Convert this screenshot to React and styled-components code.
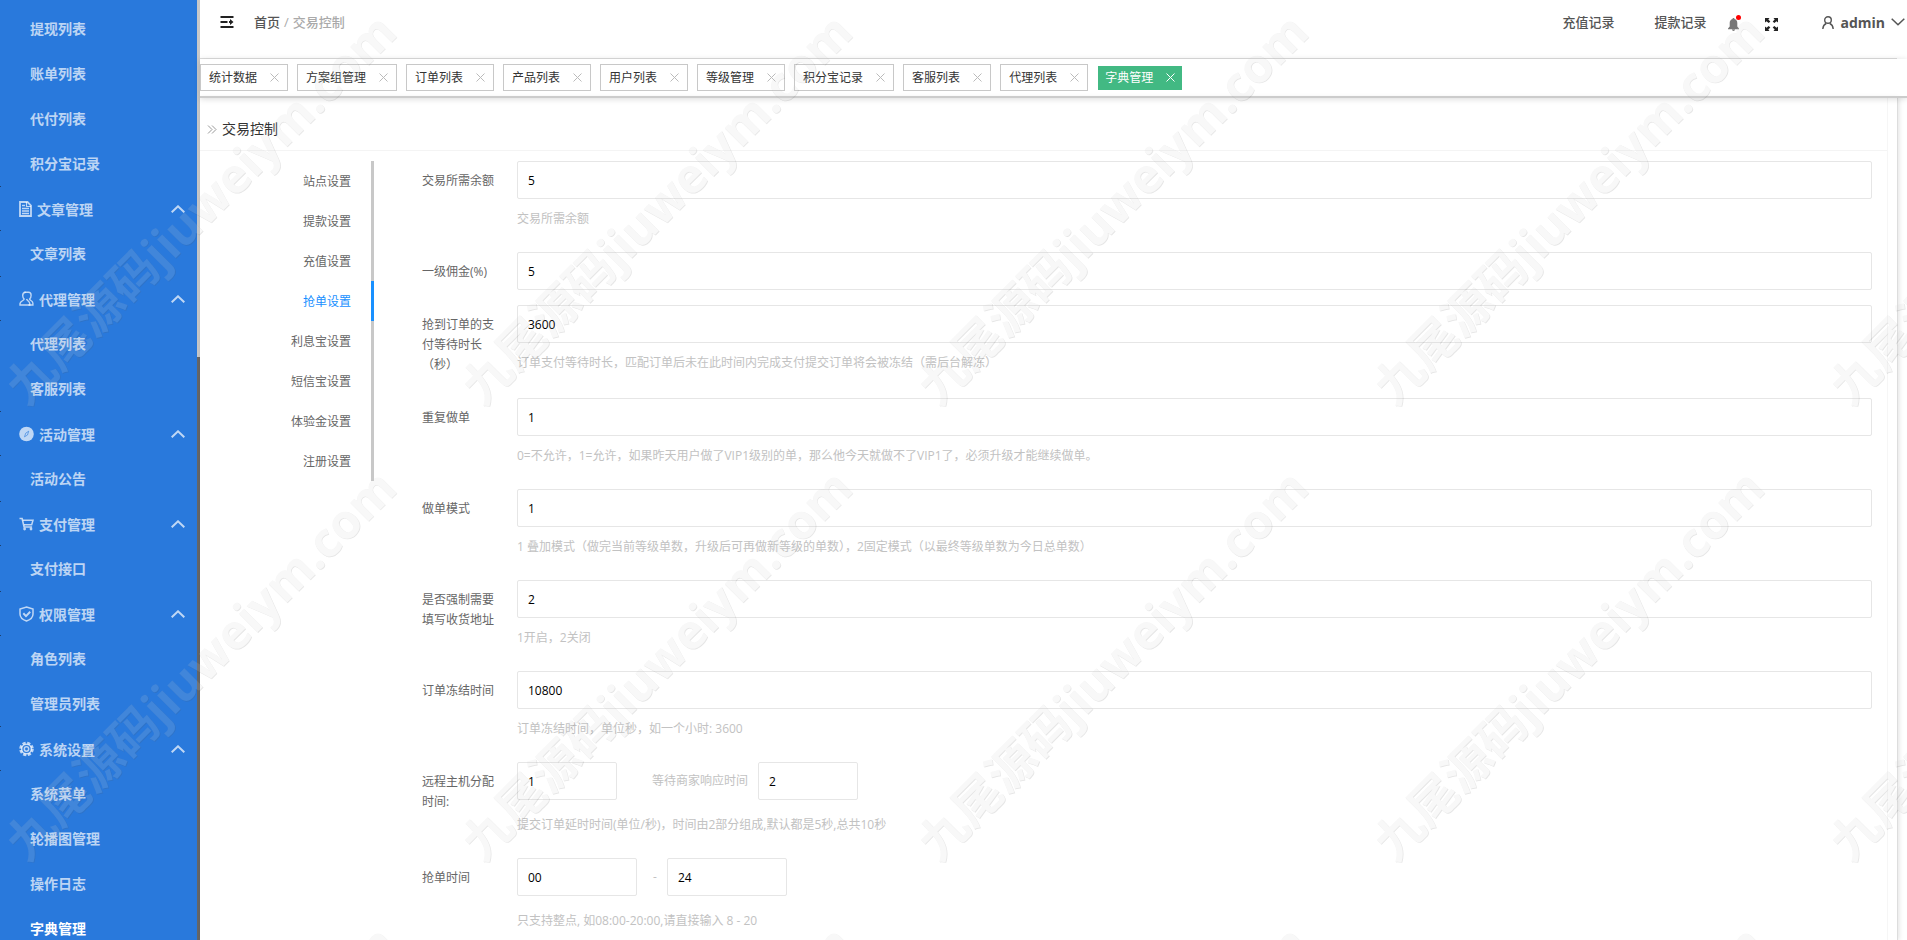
import React from 'react'
import styled, { createGlobalStyle, css } from 'styled-components'

const GlobalStyle = createGlobalStyle`
  * {
    box-sizing: border-box;
  }

  body {
    margin: 0;
    background: #fff;
    color: #666;
    font-family: "Open Sans", "Noto Sans CJK SC", sans-serif;
    font-size: 12px;
    line-height: 20px;
  }

  a {
    color: inherit;
    text-decoration: none;
  }

  button, input {
    font-family: inherit;
  }

  ul {
    margin: 0;
    padding: 0;
    list-style: none;
  }
`

const Layout = styled.div`
  display: flex;
  height: 100vh;
  overflow: hidden;
`

/* sidebar */

const Sidebar = styled.nav`
  flex: 0 0 200px;
  display: flex;
  background: #2979dc;
`

const Menu = styled.ul`
  flex: 1;
  padding-top: 6px;
  overflow: hidden;
`

const ScrollTrack = styled.div`
  width: 3px;
  background: #666;
`

const ScrollThumb = styled.div`
  height: 38%;
  background: #c8c8c8;
`

const MenuLink = styled.a`
  display: flex;
  align-items: center;
  height: 45px;
  padding-left: 30px;
  color: ${({ $active }) => ($active ? '#fff' : 'rgba(255, 255, 255, 0.7)')};
  font-size: 14px;
  font-weight: 700;
`

const tick = 'linear-gradient(#1d3f6e, #1d3f6e)'

const GroupButton = styled.button`
  display: flex;
  align-items: center;
  gap: 5px;
  width: 100%;
  height: 45px;
  padding: 0 12px 0 19px;
  border: 0;
  background: ${tick} 0 0 / 1px 1px no-repeat, ${tick} 0 100% / 1px 1px no-repeat;
  color: rgba(255, 255, 255, 0.7);
  font-size: 14px;
  font-weight: 700;
  text-align: left;
`

const GroupName = styled.span`
  flex: 1;
`

/* top bar */

const Main = styled.main`
  flex: 1;
  min-width: 0;
  display: flex;
  flex-direction: column;
`

const Header = styled.header`
  display: flex;
  align-items: flex-start;
  justify-content: space-between;
  height: 59px;
  padding: 8px 2px 0 20px;
  background: linear-gradient(#ddd, #ddd) 0 100% / calc(100% - 10px) 1px no-repeat;
  font-size: 13px;
`

const HeaderSide = styled.div`
  display: flex;
  align-items: center;
  height: 28px;
`

const IconButton = styled.button`
  display: flex;
  position: relative;
  padding: 0;
  border: 0;
  background: none;
  color: ${({ $color }) => $color || '#555'};
`

const Breadcrumb = styled.div`
  display: flex;
  gap: 4px;
  margin-left: 20px;
  color: #aaa;
  font-weight: 500;

  a {
    color: #555;
  }
`

const HeaderLinks = styled.div`
  display: flex;
  gap: 40px;
  margin-right: 22px;
  color: #555;
  font-weight: 500;
`

const HeaderTools = styled.div`
  display: flex;
  gap: 26px;
  padding-top: 4px;
`

const Dot = styled.span`
  position: absolute;
  top: -3px;
  right: -2px;
  width: 5px;
  height: 5px;
  border-radius: 50%;
  background: #f00;
`

const UserButton = styled(IconButton)`
  align-items: center;
  gap: 6px;
  margin-left: 44px;
  font-size: 14px;
  font-weight: 700;
`

/* tabs */

const TabBar = styled.div`
  position: relative;
  display: flex;
  align-items: center;
  gap: 9px;
  height: 39px;
  border-bottom: 2px solid #ccc;
  box-shadow: 0 1px 6px rgba(0, 0, 0, 0.15);
`

const Tab = styled.div`
  display: flex;
  align-items: center;
  gap: 13px;
  height: 27px;
  padding: 0 8px;
  border: 1px solid #c8c8c8;
  color: #333;
  white-space: nowrap;

  ${({ $active }) => $active && css`
    height: 24px;
    margin-left: 1px;
    padding: 0 7px;
    border: 0;
    background: #42b983;
    color: #fff;
  `}
`

/* content */

const Content = styled.div`
  flex: 1;
  min-height: 0;
  margin-right: 9px;
  padding-right: 9px;
  border-right: 1px solid #ddd;
  box-shadow: 1px 0 5px rgba(0, 0, 0, 0.12);
  overflow: hidden;
`

const Panel = styled.section`
  height: 100%;
  border-right: 1px solid #f6f6f6;
`

const PanelTitle = styled.h1`
  display: flex;
  align-items: center;
  gap: 5px;
  height: 53px;
  margin: 0;
  padding: 10px 0 0 7px;
  border-bottom: 1px solid #f4f4f4;
  color: #333;
  font-size: 14px;
  font-weight: 400;
`

const PanelBody = styled.div`
  display: flex;
  padding: 10px 15px 0 0;
`

const SideTabs = styled.ul`
  flex: 0 0 174px;
  align-self: flex-start;
  margin-right: 48px;
`

const SideTab = styled.li`
  height: 40px;
  padding-right: 20px;
  border-right: 3px solid ${({ $active }) => ($active ? '#1890ff' : '#c8c8c8')};
  color: ${({ $active }) => ($active ? '#1890ff' : '#666')};
  line-height: 42px;
  text-align: right;
`

const Form = styled.form`
  flex: 1;
  min-width: 0;
`

const FormItem = styled.div`
  display: flex;
  align-items: flex-start;
  gap: 15px;
  margin-bottom: 15px;
`

const Label = styled.label`
  flex: 0 0 80px;
  padding: 10px 0 8px;
`

const Field = styled.div`
  flex: 1;
  min-width: 0;
  display: flex;
  flex-direction: column;
  gap: ${({ $split }) => ($split ? '5px' : '0')};
`

const Input = styled.input`
  width: ${({ $width }) => $width || '100%'};
  height: 38px;
  padding: 0 10px;
  border: 1px solid #e6e6e6;
  border-radius: 2px;
  background: #fff;
  color: #000;
  font-size: 12px;
`

const InputRow = styled.div`
  display: flex;
  align-items: center;
  gap: 10px;
`

const Aux = styled.label`
  margin-left: ${({ $indent }) => $indent};
  color: #c2c2c2;
`

const Help = styled.p`
  margin: 0;
  padding: 10px 0 8px;
  color: #c2c2c2;
`

/* watermark */

const Watermark = styled.div`
  position: fixed;
  top: -60px;
  bottom: 0;
  left: 0;
  width: calc(100% + 456px);
  display: grid;
  grid-template-columns: repeat(auto-fill, 456px);
  grid-auto-rows: 456px;
  overflow: hidden;
  opacity: 0.15;
  pointer-events: none;
`

const Stamp = styled.div`
  display: flex;
  align-items: center;
  justify-content: center;
  padding: 80px 56px 0 0;
  color: #ccc;
  font-size: 48px;
  font-weight: 700;
  white-space: nowrap;
  text-shadow: 0 1px 0 #555;

  span {
    transform: rotate(-45deg);
  }
`

const icons = {
  file: (
    <>
      <path d="M1 1h7.500l3.500 3.500V15H1z" fill="none" stroke="currentColor" strokeWidth="1.800" />
      <path d="M7.500 1v4.500H12" fill="none" stroke="currentColor" strokeWidth="1.200" />
      <path d="M3 4.500h3M3 7.500h7M3 10h7M3 12.500h7" stroke="currentColor" strokeWidth="1.500" />
    </>
  ),
  agent: (
    <g fill="none" stroke="currentColor" strokeWidth="1.400">
      <path d="M5.500 1.200h4c1.500 0 2.600 1.300 2.600 3 0 1.600-.5 2.900-1.500 3.900.2 1.400 3.300 1.600 3.300 4.100v1.800H9.500" />
      <path d="M6.600 1.300C4.900 1.400 3.600 2.800 3.700 4.700c.1 1.500.6 2.600 1.400 3.400C4.900 9.700 1.300 10 1 12.600V14h9.800v-1.300c0-2.600-2.600-2.900-3.300-4.600" />
    </g>
  ),
  compass: (
    <>
      <circle cx="7.500" cy="8" r="7.300" fill="currentColor" />
      <path d="M9.700 5.200 8.500 9 5.500 10.800l1.200-3.600z" fill="none" stroke="#2979dc" strokeWidth="0.600" />
    </>
  ),
  cart: (
    <>
      <path d="M0.500 2.500h2.600l2 8.500h8" fill="none" stroke="currentColor" strokeWidth="1.600" />
      <path d="M3.700 4.200H14L12.700 8.800H5" fill="none" stroke="currentColor" strokeWidth="1.500" />
      <circle cx="5.600" cy="13" r="1.400" fill="currentColor" />
      <circle cx="12" cy="13" r="1.400" fill="currentColor" />
    </>
  ),
  shield: (
    <g fill="none" stroke="currentColor">
      <path d="M7.500 1 14 3v5c0 3.500-2.700 5.700-6.500 7C3.700 13.700 1 11.500 1 8V3z" strokeWidth="1.500" />
      <path d="m4.300 7.300 2.700 2.800 4.200-4.300" strokeWidth="2" />
    </g>
  ),
  gear: (
    <g fill="none" stroke="currentColor">
      <circle cx="7.500" cy="8" r="6" strokeWidth="2.600" strokeDasharray="3.100 1.612" />
      <circle cx="7.500" cy="8" r="4.800" strokeWidth="1.500" />
      <circle cx="7.500" cy="8" r="2.200" strokeWidth="1.500" />
    </g>
  )
}

const MenuIcon = ({ name }) => (
  <svg width={name === 'file' ? 13 : 15} height="16" viewBox={name === 'file' ? '0 0 13 16' : '0 0 15 16'}>
    {icons[name]}
  </svg>
)

const Chevron = ({ up }) => (
  <svg width="14" height="8" viewBox="0 0 14 8" fill="none" stroke="currentColor" strokeWidth={up ? 2 : 1.5}>
    <path d={up ? 'M0.700 7.300 7 1.300l6.300 6' : 'M0.700 0.700 7 6.800l6.300-6.100'} />
  </svg>
)

const CloseIcon = ({ color }) => (
  <svg width="9" height="9" viewBox="0 0 9 9" stroke={color} strokeWidth="1">
    <path d="M0.500 0.500l8 8M8.500 0.500l-8 8" />
  </svg>
)

const ShrinkIcon = () => (
  <svg width="14" height="12" viewBox="0 0 14 12" fill="#222">
    <path d="M0.500 0h13v2h-13zM0.500 5h7v2h-7zM9 5h1V3l3.500 3L10 9V7H9zM0.500 10h13v2h-13z" />
  </svg>
)

const BellIcon = () => (
  <svg width="11" height="13" viewBox="0 0 11 13" fill="currentColor">
    <path d="M5.500 0c.6 0 1 .4 1 1 1.800.5 2.800 2 2.800 4v3.500L11 10.500v.7H0v-.7l1.700-2V5c0-2 1-3.500 2.800-4 0-.6.400-1 1-1zM4 11.600h3c0 .8-.7 1.400-1.500 1.400S4 12.400 4 11.600z" />
  </svg>
)

const FullscreenIcon = () => (
  <svg width="13" height="13" viewBox="0 0 13 13" fill="#222">
    <path d="M0 0h4.500L3.300 1.500l2 2-1.600 1.600-2.200-1.900L0 4.500zM13 0v4.500l-1.500-1.300-2.200 1.900L7.700 3.500l2-2L8.500 0zM0 13V8.500l1.500 1.300 2.200-1.900 1.600 1.600-2 2L4.500 13zM13 13H8.500l1.200-1.500-2-2 1.600-1.600 2.200 1.900L13 8.500z" />
  </svg>
)

const UserIcon = () => (
  <svg width="12" height="13" viewBox="0 0 12 13" fill="none" stroke="currentColor" strokeWidth="1.400">
    <circle cx="6" cy="4" r="3.300" />
    <path d="M0.800 13c.2-3 1.700-4.700 3.400-5.500M11.200 13c-.2-3-1.700-4.700-3.400-5.500" />
  </svg>
)

const AnglesIcon = () => (
  <svg width="10" height="9" viewBox="0 0 10 9" fill="none" stroke="#999">
    <path d="M1 0.500l4 4-4 4M5 0.500l4 4-4 4" />
  </svg>
)

const menu = [
  { items: ['提现列表', '账单列表', '代付列表', '积分宝记录'] },
  { name: '文章管理', icon: 'file', items: ['文章列表'] },
  { name: '代理管理', icon: 'agent', items: ['代理列表', '客服列表'] },
  { name: '活动管理', icon: 'compass', items: ['活动公告'] },
  { name: '支付管理', icon: 'cart', items: ['支付接口'] },
  { name: '权限管理', icon: 'shield', items: ['角色列表', '管理员列表'] },
  { name: '系统设置', icon: 'gear', items: ['系统菜单', '轮播图管理', '操作日志', '字典管理'] }
]

const tabs = [
  '统计数据', '方案组管理', '订单列表', '产品列表', '用户列表',
  '等级管理', '积分宝记录', '客服列表', '代理列表', '字典管理'
]

const sideTabs = [
  '站点设置', '提款设置', '充值设置', '抢单设置',
  '利息宝设置', '短信宝设置', '体验金设置', '注册设置'
]

const fields = [
  { id: 'balance', label: '交易所需余额', value: '5', help: '交易所需余额' },
  { id: 'commission', label: '一级佣金(%)', value: '5' },
  {
    id: 'wait',
    label: '抢到订单的支付等待时长（秒）',
    value: '3600',
    help: '订单支付等待时长，匹配订单后未在此时间内完成支付提交订单将会被冻结（需后台解冻）'
  },
  {
    id: 'repeat',
    label: '重复做单',
    value: '1',
    help: '0=不允许，1=允许，如果昨天用户做了VIP1级别的单，那么他今天就做不了VIP1了，必须升级才能继续做单。'
  },
  {
    id: 'mode',
    label: '做单模式',
    value: '1',
    help: '1 叠加模式（做完当前等级单数，升级后可再做新等级的单数），2固定模式（以最终等级单数为今日总单数）'
  },
  { id: 'address', label: '是否强制需要填写收货地址', value: '2', help: '1开启，2关闭' },
  { id: 'freeze', label: '订单冻结时间', value: '10800', help: '订单冻结时间，单位秒，如一个小时: 3600' }
]

const TextField = ({ id, label, value, help }) => (
  <FormItem>
    <Label htmlFor={id}>{label}</Label>
    <Field>
      <Input id={id} defaultValue={value} />
      {help && <Help>{help}</Help>}
    </Field>
  </FormItem>
)

const PairField = ({ id, label, values, width, aux, indent, help }) => (
  <FormItem>
    <Label htmlFor={id}>{label}</Label>
    <Field $split>
      <InputRow>
        <Input id={id} defaultValue={values[0]} $width={width} />
        <Aux htmlFor={`${id}-end`} $indent={indent}>{aux}</Aux>
        <Input id={`${id}-end`} defaultValue={values[1]} $width={width} />
      </InputRow>
      <Help>{help}</Help>
    </Field>
  </FormItem>
)

const SideMenu = () => (
  <Sidebar>
    <Menu>
      {menu.map(({ name, icon, items }) => (
        <li key={name || 'top'}>
          {name && (
            <GroupButton type="button">
              <MenuIcon name={icon} />
              <GroupName>{name}</GroupName>
              <Chevron up />
            </GroupButton>
          )}
          <ul>
            {items.map((item) => (
              <li key={item}>
                <MenuLink href="#" $active={item === '字典管理'}>{item}</MenuLink>
              </li>
            ))}
          </ul>
        </li>
      ))}
    </Menu>
    <ScrollTrack>
      <ScrollThumb />
    </ScrollTrack>
  </Sidebar>
)

const TopBar = () => (
  <Header>
    <HeaderSide>
      <IconButton type="button" aria-label="menu"><ShrinkIcon /></IconButton>
      <Breadcrumb>
        <a href="#">首页</a>
        <span>/</span>
        <span>交易控制</span>
      </Breadcrumb>
    </HeaderSide>
    <HeaderSide>
      <HeaderLinks>
        <a href="#">充值记录</a>
        <a href="#">提款记录</a>
      </HeaderLinks>
      <HeaderTools>
        <IconButton type="button" aria-label="notice" $color="#777">
          <BellIcon />
          <Dot />
        </IconButton>
        <IconButton type="button" aria-label="fullscreen"><FullscreenIcon /></IconButton>
      </HeaderTools>
      <UserButton type="button">
        <UserIcon />
        admin
        <Chevron />
      </UserButton>
    </HeaderSide>
  </Header>
)

export default function App() {
  return (
    <>
      <GlobalStyle />
      <Layout>
        <SideMenu />
        <Main>
          <TopBar />
          <TabBar>
            {tabs.map((tab) => {
              const active = tab === '字典管理'
              return (
                <Tab key={tab} $active={active}>
                  <a href="#">{tab}</a>
                  <IconButton type="button" aria-label="close">
                    <CloseIcon color={active ? '#fff' : '#bbb'} />
                  </IconButton>
                </Tab>
              )
            })}
          </TabBar>
          <Content>
            <Panel>
              <PanelTitle>
                <AnglesIcon />
                交易控制
              </PanelTitle>
              <PanelBody>
                <SideTabs>
                  {sideTabs.map((tab) => (
                    <SideTab key={tab} $active={tab === '抢单设置'}>{tab}</SideTab>
                  ))}
                </SideTabs>
                <Form>
                  {fields.map((field) => <TextField key={field.id} {...field} />)}
                  <PairField
                    id="host"
                    label="远程主机分配时间:"
                    values={['1', '2']}
                    width="100px"
                    aux="等待商家响应时间"
                    indent="25px"
                    help="提交订单延时时间(单位/秒)，时间由2部分组成,默认都是5秒,总共10秒" />
                  <PairField
                    id="hours"
                    label="抢单时间"
                    values={['00', '24']}
                    width="120px"
                    aux="-"
                    indent="6px"
                    help="只支持整点, 如08:00-20:00,请直接输入 8 - 20" />
                </Form>
              </PanelBody>
            </Panel>
          </Content>
        </Main>
      </Layout>
      <Watermark aria-hidden="true">
        {Array.from({ length: 15 }, (_, i) => (
          <Stamp key={i}><span>九尾源码jiuweiym.com</span></Stamp>
        ))}
      </Watermark>
    </>
  )
}
